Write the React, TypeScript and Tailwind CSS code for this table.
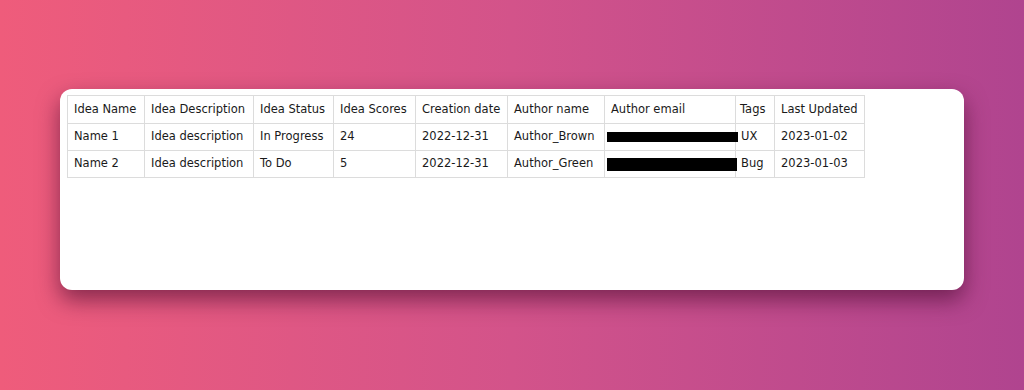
import React from 'react';

const columns = [
  { label: 'Idea Name', w: 'w-[77px]' },
  { label: 'Idea Description', w: 'w-[109px]' },
  { label: 'Idea Status', w: 'w-[80px]' },
  { label: 'Idea Scores', w: 'w-[82px]' },
  { label: 'Creation date', w: 'w-[92px]' },
  { label: 'Author name', w: 'w-[97px]' },
  { label: 'Author email', w: 'w-[131px]' },
  { label: 'Tags', w: 'w-[39px]' },
  { label: 'Last Updated', w: 'w-[90px]' },
];

const rows = [
  ['Name 1', 'Idea description', 'In Progress', '24', '2022-12-31', 'Author_Brown', '', 'UX', '2023-01-02'],
  ['Name 2', 'Idea description', 'To Do', '5', '2022-12-31', 'Author_Green', '', 'Bug', '2023-01-03'],
];

export default function App() {
  return (
    <div className="w-[1024px] h-[390px] overflow-hidden bg-gradient-to-r from-[#ef5c7b] via-[#d3538a] to-[#b0448f] pt-[89px] pl-[60px]">
      <div className="w-[904px] h-[201px] bg-white rounded-[12px] shadow-[0_10px_22px_rgba(70,10,45,0.6)] pt-[6px] pl-[7px]">
        <table
          className="w-[797px] border-collapse table-fixed text-[11.5px] text-[#1a1a1a] leading-none"
          style={{ fontFamily: '"DejaVu Sans", Verdana, sans-serif' }}
        >
          <thead>
            <tr className="h-[28px]">
              {columns.map((c, j) => (
                <th key={c.label} className={`${c.w} border border-[#dcdcdc] ${j === 7 ? 'px-[4px]' : 'px-[6px]'} text-left font-normal whitespace-nowrap`}>
                  {c.label}
                </th>
              ))}
            </tr>
          </thead>
          <tbody>
            {rows.map((r, i) => (
              <tr key={i} className="h-[27px]">
                {r.map((v, j) =>
                  j === 6 ? (
                    <td key={j} className="relative border border-[#dcdcdc] p-0">
                      <div className={`absolute left-[2px] bg-black ${i === 0 ? 'top-[8px] h-[10px] w-[131px]' : 'top-[7px] h-[13px] w-[130px]'}`} />
                    </td>
                  ) : (
                    <td key={j} className={`border border-[#dcdcdc] ${j === 7 ? 'px-[5px]' : 'px-[6px]'} whitespace-nowrap`}>
                      {v}
                    </td>
                  )
                )}
              </tr>
            ))}
          </tbody>
        </table>
      </div>
    </div>
  );
}
